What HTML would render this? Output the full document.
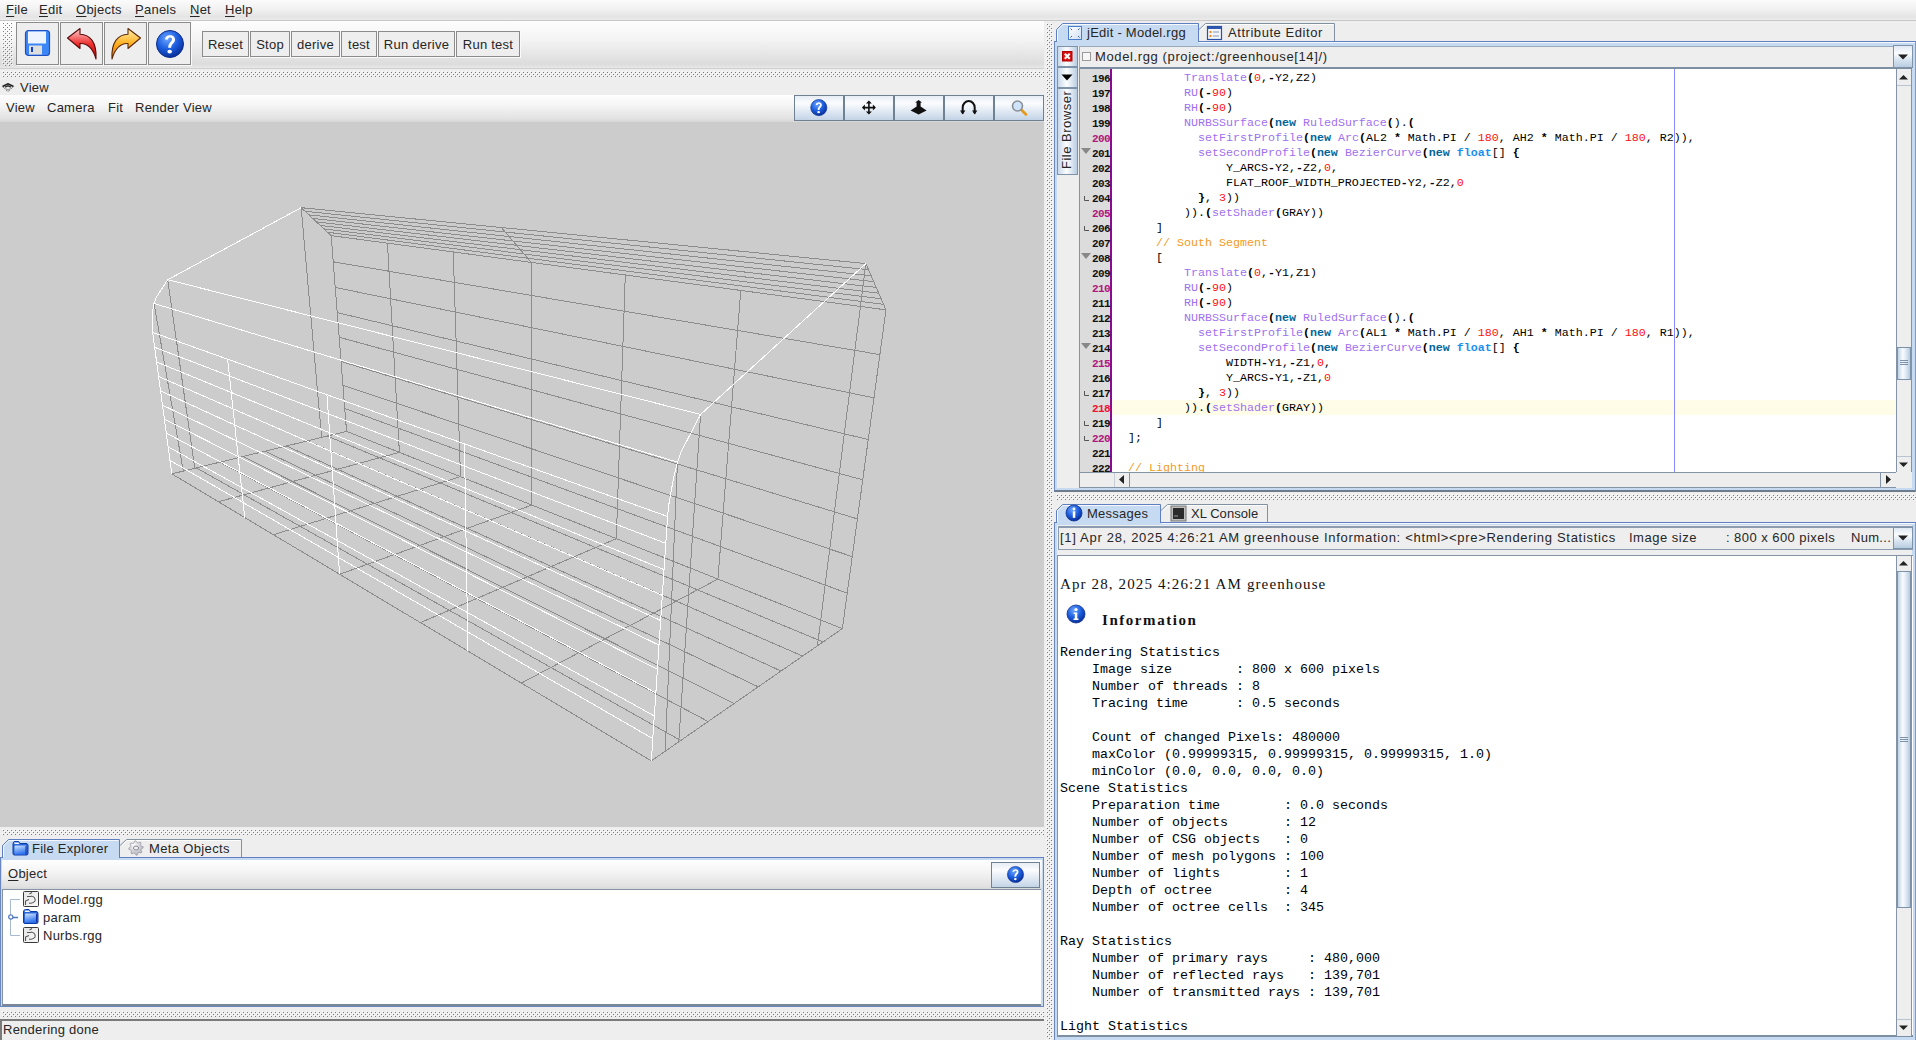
<!DOCTYPE html>
<html><head><meta charset="utf-8">
<style>
*{margin:0;padding:0;box-sizing:border-box}
html,body{width:1916px;height:1040px;overflow:hidden;background:#eeeeee;font-family:"Liberation Sans",sans-serif;font-size:13px;color:#262626;letter-spacing:.25px}
.a{position:absolute}
.t{position:absolute;white-space:pre;line-height:18px}
.u{text-decoration:underline;text-underline-offset:2px}
.tb{position:absolute;top:31px;height:26px;border:1px solid #8b8b8b;background:#eeeeee;box-shadow:1px 1px 0 #fafafa}
.tb span{position:absolute;left:0;right:0;top:4px;text-align:center;white-space:pre;line-height:18px}
.ib{position:absolute;top:22px;width:43px;height:43px;border:1px solid #8b8b8b;background:#eeeeee;box-shadow:1px 1px 0 #fafafa}
.vb{position:absolute;top:95px;height:26px;border:1px solid #6f8193;background:linear-gradient(#e6edf5,#fbfcfe 30%,#e3ebf4 60%,#c3d4e6)}
.tab{position:absolute;height:19px;border:1px solid #6b87c0;border-bottom:none;background:#eeeeee;border-radius:0}
.tab.sel{background:#c6dbf1}
.tab span{position:absolute;top:1px;white-space:pre;line-height:16px}
</style></head><body>
<svg width="0" height="0" style="position:absolute">
<defs>
<pattern id="dp" width="4" height="4" patternUnits="userSpaceOnUse">
<rect x="0" y="0" width="1" height="1" fill="#ffffff"/><rect x="1" y="1" width="1" height="1" fill="#727e8a"/>
<rect x="2" y="2" width="1" height="1" fill="#ffffff"/><rect x="3" y="3" width="1" height="1" fill="#727e8a"/>
</pattern>
<radialGradient id="hb" cx="40%" cy="30%" r="70%"><stop offset="0" stop-color="#6fa6ff"/><stop offset=".55" stop-color="#1c5fe0"/><stop offset="1" stop-color="#0a2f9a"/></radialGradient>
<linearGradient id="rg" x1="0" y1="0" x2="0" y2="1"><stop offset="0" stop-color="#ffd0d0"/><stop offset=".5" stop-color="#f03030"/><stop offset="1" stop-color="#b00000"/></linearGradient>
<linearGradient id="og" x1="0" y1="0" x2="0" y2="1"><stop offset="0" stop-color="#fff0b0"/><stop offset=".5" stop-color="#ffb020"/><stop offset="1" stop-color="#e07000"/></linearGradient>
<g id="help">
<circle cx="0" cy="0" r="13.5" fill="url(#hb)" stroke="#0b2f8c" stroke-width="1"/>
<path d="M-5,-4.5 C-5,-10 5,-10.5 5,-4.5 C5,-0.5 1.2,-0.5 1.2,3.8 L-1.8,3.8 C-1.8,-1.8 2,-2 2,-4.8 C2,-7 -2,-7 -2,-4.5 Z" fill="#fff"/>
<ellipse cx="-0.3" cy="7.6" rx="2.3" ry="1.9" fill="#fff"/>
</g>
</defs></svg>

<!-- MENUBAR -->
<div class="a" style="left:0;top:0;width:1916px;height:21px;background:linear-gradient(#fbfbfb,#f3f3f3 40%,#e4e4e4 85%,#ececec);border-bottom:1px solid #c6c6c6"></div>
<div class="t" style="left:6px;top:1px"><span class="u">F</span>ile</div>
<div class="t" style="left:39px;top:1px"><span class="u">E</span>dit</div>
<div class="t" style="left:76px;top:1px"><span class="u">O</span>bjects</div>
<div class="t" style="left:135px;top:1px"><span class="u">P</span>anels</div>
<div class="t" style="left:190px;top:1px"><span class="u">N</span>et</div>
<div class="t" style="left:225px;top:1px"><span class="u">H</span>elp</div>

<!-- LEFT toolbar -->
<div class="a" style="left:0;top:21px;width:1044px;height:48px;background:linear-gradient(#fdfdfd,#f4f4f4 40%,#dcdcdc 92%,#e8e8e8);border-bottom:1px solid #cfcfcf"></div>
<svg class="a" style="left:2px;top:22px" width="11" height="44"><rect width="11" height="44" fill="url(#dp)"/></svg>
<div class="ib" style="left:16px"></div>
<div class="ib" style="left:60px"></div>
<div class="ib" style="left:104px"></div>
<div class="ib" style="left:148px"></div>
<!-- save icon -->
<svg class="a" style="left:24px;top:29px" width="28" height="29">
<rect x="1.5" y="1.5" width="24" height="25" rx="3" fill="#3d86f5" stroke="#1f4fc0" stroke-width="1.2"/>
<rect x="4" y="2.5" width="18" height="12" fill="#eef4ff"/>
<rect x="5" y="16.5" width="13" height="9" fill="#dedede"/>
<rect x="7" y="18" width="2" height="5" fill="#1040d0"/>
</svg>
<!-- undo icon -->
<svg class="a" style="left:66px;top:27px" width="33" height="34">
<path d="M1.5,11 L14,1.5 L14,7.2 C24,7.5 31,15 30,32 C27,22 22,16 14,16.5 L14,21.5 Z" fill="url(#rg)" stroke="#5a0a0a" stroke-width="1.1" stroke-linejoin="round"/>
</svg>
<!-- redo icon -->
<svg class="a" style="left:109px;top:27px" width="33" height="34">
<path d="M31.5,11 L19,1.5 L19,7.2 C9,7.5 2,15 3,32 C6,22 11,16 19,16.5 L19,21.5 Z" fill="url(#og)" stroke="#5a2a0a" stroke-width="1.1" stroke-linejoin="round"/>
</svg>
<svg class="a" style="left:154px;top:28px" width="32" height="32"><use href="#help" x="16" y="16"/></svg>

<div class="tb" style="left:202px;width:47px"><span>Reset</span></div>
<div class="tb" style="left:250px;width:40px"><span>Stop</span></div>
<div class="tb" style="left:291px;width:49px"><span>derive</span></div>
<div class="tb" style="left:341px;width:36px"><span>test</span></div>
<div class="tb" style="left:378px;width:77px"><span>Run derive</span></div>
<div class="tb" style="left:456px;width:64px"><span>Run test</span></div>

<!-- vertical splitter -->
<svg class="a" style="left:1046px;top:23px" width="7" height="1017"><rect width="7" height="1017" fill="url(#dp)"/></svg>

<!-- dotted row -->
<svg class="a" style="left:2px;top:71px" width="1042" height="6"><rect width="1042" height="6" fill="url(#dp)"/></svg>

<!-- View title -->
<svg class="a" style="left:2px;top:83px" width="13" height="10">
<path d="M0.5,3.5 L6,0.8 L11.5,3.5" fill="none" stroke="#222" stroke-width="1.6"/>
<path d="M3,4.2 L6,2.8 L9,4.2" fill="none" stroke="#333" stroke-width="1.4"/>
<path d="M0.8,3.8 L6,8.6 L11.2,3.8" fill="none" stroke="#555" stroke-width="1" stroke-dasharray="1.2 1"/>
<path d="M3.5,5.5 L6,7 L8.5,5.5" fill="none" stroke="#777" stroke-width="0.8"/>
</svg>
<div class="t" style="left:20px;top:79px">View</div>
<!-- View menubar -->
<div class="a" style="left:0;top:95px;width:1044px;height:27px;background:linear-gradient(#fefefe,#f6f6f6 35%,#e2e2e2 88%,#d6d6d6)"></div>
<div class="t" style="left:6px;top:99px">View</div>
<div class="t" style="left:47px;top:99px">Camera</div>
<div class="t" style="left:108px;top:99px">Fit</div>
<div class="t" style="left:135px;top:99px">Render View</div>
<div class="vb" style="left:794px;width:50px"></div>
<div class="vb" style="left:844px;width:50px"></div>
<div class="vb" style="left:894px;width:50px"></div>
<div class="vb" style="left:944px;width:50px"></div>
<div class="vb" style="left:994px;width:50px"></div>
<svg class="a" style="left:794px;top:95px" width="250" height="26">
<g transform="translate(24.8,12.6) scale(0.6)"><use href="#help"/></g>
<g transform="translate(74.9,12.6)" fill="#111" stroke="#111">
<path d="M-5.5,0 H5.5 M0,-5.5 V5.5" stroke-width="1.6"/>
<path d="M-7,0 L-4,-3 L-4,3 Z M7,0 L4,-3 L4,3 Z M0,-7 L-3,-4 L3,-4 Z M0,7 L-3,4 L3,4 Z" stroke="none"/>
</g>
<g transform="translate(124.6,12.6)" fill="#111">
<path d="M-8,3 L-2,-1 L-2,-5 L-3.5,-5 L0,-7.5 L3.5,-5 L2,-5 L2,-1 L8,3 L0,7 Z"/>
</g>
<g transform="translate(174.7,12.6)" fill="none" stroke="#111">
<path d="M-6,5 V0 A6,6.5 0 0 1 6,0 V5" stroke-width="2"/>
<path d="M-8,3 L-6,6.5 L-4,3 M4,3 L6,6.5 L8,3" fill="#111" stroke-width="1"/>
</g>
<g transform="translate(223.5,11)">
<path d="M3.5,3.5 L8.5,8.5" stroke="#e49a18" stroke-width="2.6" stroke-linecap="round"/>
<circle cx="0" cy="0" r="5" fill="#cfe4fb" stroke="#8a8f96" stroke-width="1.6"/>
</g>
</svg>

<!-- canvas -->
<div class="a" style="left:0;top:122px;width:1044px;height:705px;background:#cccccc"></div>
<svg class="a" style="left:0;top:0" width="1044" height="827" shape-rendering="crispEdges"><g fill="none" stroke-width="1">
<g stroke="#8c8c8c">
<polyline points="346.56,431.34 842.39,628.59"/>
<polyline points="344.76,408.49 847.23,593.18"/>
<polyline points="342.93,385.20 852.23,556.63"/>
<polyline points="341.07,361.46 857.40,518.87"/>
<polyline points="339.16,337.27 862.73,479.86"/>
<polyline points="337.23,312.60 868.25,439.53"/>
<polyline points="335.25,287.45 873.96,397.80"/>
<polyline points="333.23,261.79 879.87,354.61"/>
<polyline points="331.17,235.62 885.99,309.87"/>
<polyline points="346.56,431.34 331.17,235.62"/>
<polyline points="399.42,452.37 387.43,243.15"/>
<polyline points="460.49,476.66 453.24,251.96"/>
<polyline points="531.85,505.05 531.29,262.40"/>
<polyline points="616.33,538.66 625.31,274.98"/>
<polyline points="717.91,579.07 740.78,290.44"/>
<polyline points="842.39,628.59 885.99,309.87"/>
<polyline points="171.81,473.88 651.34,760.82"/>
<polyline points="196.38,467.90 680.67,740.52"/>
<polyline points="220.09,462.13 708.15,721.50"/>
<polyline points="242.98,456.56 733.94,703.65"/>
<polyline points="265.09,451.17 758.21,686.85"/>
<polyline points="286.48,445.97 781.07,671.03"/>
<polyline points="307.16,440.93 802.66,656.09"/>
<polyline points="327.17,436.06 823.06,641.97"/>
<polyline points="346.56,431.34 842.39,628.59"/>
<polyline points="171.81,473.88 346.56,431.34"/>
<polyline points="218.41,501.77 399.42,452.37"/>
<polyline points="273.49,534.72 460.49,476.66"/>
<polyline points="339.59,574.28 531.85,505.05"/>
<polyline points="420.39,622.63 616.33,538.66"/>
<polyline points="521.42,683.08 717.91,579.07"/>
<polyline points="651.34,760.82 842.39,628.59"/>
<polyline points="301.17,207.68 865.86,263.62"/>
<polyline points="305.03,211.28 868.51,269.72"/>
<polyline points="308.86,214.84 871.12,275.72"/>
<polyline points="312.66,218.38 873.69,281.62"/>
<polyline points="316.42,221.88 876.23,287.44"/>
<polyline points="320.16,225.36 878.72,293.18"/>
<polyline points="323.86,228.81 881.18,298.82"/>
<polyline points="327.53,232.23 883.60,304.39"/>
<polyline points="331.17,235.62 885.99,309.87"/>
<polyline points="301.17,207.68 305.03,211.28 308.86,214.84 312.66,218.38 316.42,221.88 320.16,225.36 323.86,228.81 327.53,232.23 331.17,235.62"/>
<polyline points="501.37,227.52 505.26,232.04 509.10,236.52 512.90,240.95 516.65,245.33 520.37,249.67 524.05,253.96 527.69,258.20 531.29,262.40"/>
<polyline points="865.86,263.62 868.51,269.72 871.12,275.72 873.69,281.62 876.23,287.44 878.72,293.18 881.18,298.82 883.60,304.39 885.99,309.87"/>
<polyline points="301.17,207.68 321.64,437.41"/>
<polyline points="167.71,279.71 194.74,468.30"/>
<polyline points="154.01,303.49 183.32,471.08"/>
<polyline points="865.86,263.62 817.46,645.84"/>
<polyline points="700.61,414.40 678.74,741.86"/>
<polyline points="677.47,462.16 665.19,751.23"/>
</g><g stroke="#ffffff">
<polyline points="167.71,279.71 700.61,414.40"/>
<polyline points="154.01,303.49 677.47,462.16"/>
<polyline points="152.61,332.39 667.55,516.47"/>
<polyline points="154.63,347.27 665.77,543.34"/>
<polyline points="156.62,361.98 664.03,569.62"/>
<polyline points="158.60,376.52 662.32,595.34"/>
<polyline points="160.55,390.89 660.65,620.50"/>
<polyline points="162.48,405.11 659.02,645.13"/>
<polyline points="164.39,419.17 657.42,669.24"/>
<polyline points="166.27,433.08 655.85,692.85"/>
<polyline points="168.14,446.83 654.32,715.97"/>
<polyline points="169.99,460.43 652.81,738.62"/>
<polyline points="301.17,207.68 167.71,279.71 156.11,297.61 154.01,303.49 152.70,311.31 152.09,326.99 152.61,332.39 154.63,347.27 156.62,361.98 158.60,376.52 160.55,390.89 162.48,405.11 164.39,419.17 166.27,433.08 168.14,446.83 169.99,460.43 171.81,473.88"/>
<polyline points="865.86,263.62 700.61,414.40 681.68,450.60 677.47,462.16 673.66,477.15 668.47,506.58 667.55,516.47 665.77,543.34 664.03,569.62 662.32,595.34 660.65,620.50 659.02,645.13 657.42,669.24 655.85,692.85 654.32,715.97 652.81,738.62 651.34,760.82"/>
<polyline points="227.64,359.21 229.45,375.97 231.24,392.51 233.00,408.84 234.75,424.96 236.47,440.88 238.17,456.59 239.84,472.11 241.50,487.44 243.14,502.58 244.75,517.53"/>
<polyline points="326.91,394.70 328.27,413.88 329.60,432.76 330.91,451.37 332.21,469.71 333.48,487.77 334.74,505.57 335.98,523.12 337.20,540.42 338.40,557.47 339.59,574.28"/>
<polyline points="464.43,443.86 464.80,466.25 465.18,488.25 465.54,509.86 465.90,531.09 466.26,551.95 466.60,572.46 466.94,592.61 467.28,612.43 467.61,631.91 467.93,651.07"/>
</g></g></svg>

<!-- dotted row below canvas -->
<svg class="a" style="left:2px;top:829px" width="1042" height="6"><rect width="1042" height="6" fill="url(#dp)"/></svg>

<!-- bottom-left tabs -->
<!-- bottom-left panel -->
<div class="a" style="left:0;top:857px;width:1044px;height:150px;border:1px solid #6b87c0;border-top:1px solid #6b87c0;background:#c6dbf1"></div>
<svg class="a" style="left:0;top:838px" width="1044" height="22">
<path d="M2.5,20 V7.5 L8.5,1.5 H119.5 V20" fill="#c6dbf1" stroke="#5f7fc0" stroke-width="1"/>
<path d="M3.5,19 V8 L9,2.5 H118.5" fill="none" stroke="#ffffff" stroke-width="1" opacity=".8"/>
<path d="M120,19.5 V7.5 L126.5,1.5 H241.5 V20" fill="#eeeeee" stroke="none"/><path d="M120,7.5 L126.5,1.5 H241.5 V20" fill="none" stroke="#8191a3" stroke-width="1"/>
<path d="M122,7.8 L127,2.5 H240.5" fill="none" stroke="#ffffff" stroke-width="1"/>
<path d="M0.5,19.5 H2.5 M119.5,19.5 H1044" stroke="#5f7fc0" stroke-width="1"/>
</svg>
<div class="t" style="left:32px;top:840px">File Explorer</div>
<div class="t" style="left:149px;top:840px;letter-spacing:.36px">Meta Objects</div>
<svg class="a" style="left:12px;top:840px" width="17" height="16">
<path d="M1,4 Q1,1.5 3,1.5 L6.5,1.5 L8,3.5 L14,3.5 Q16,3.5 16,5.5 L16,13.5 Q16,15 14.5,15 L2.5,15 Q1,15 1,13.5 Z" fill="#2b66d8" stroke="#0a3aa8" stroke-width="1"/>
<path d="M2,2.5 H6.5 L7.5,4 H2.5 Z" fill="#f4f8ff"/>
<rect x="2.5" y="5.5" width="12" height="9" rx="1" fill="url(#fg)"/>
<path d="M14,6 V14.5" stroke="#1030a0" stroke-width="1"/>
</svg>
<svg class="a" style="left:128px;top:840px" width="16" height="17">
<defs><radialGradient id="gg" cx="35%" cy="30%" r="80%"><stop offset="0" stop-color="#ffffff"/><stop offset="1" stop-color="#a9a9b4"/></radialGradient></defs>
<polygon points="15.06,6.57 15.20,7.97 13.30,9.03 13.00,10.05 14.00,11.98 13.11,13.07 11.02,12.48 10.08,12.98 9.43,15.06 8.03,15.20 6.97,13.30 5.95,13.00 4.02,14.00 2.93,13.11 3.52,11.02 3.02,10.08 0.94,9.43 0.80,8.03 2.70,6.97 3.00,5.95 2.00,4.02 2.89,2.93 4.98,3.52 5.92,3.02 6.57,0.94 7.97,0.80 9.03,2.70 10.05,3.00 11.98,2.00 13.07,2.89 12.48,4.98 12.98,5.92" fill="url(#gg)" stroke="#9a9aa6" stroke-width=".7"/>
<ellipse cx="8" cy="8" rx="2.6" ry="2" fill="#f0f0f0" stroke="#8a8a96" stroke-width="1"/>
</svg>

<div class="a" style="left:2px;top:860px;width:1040px;height:29px;background:linear-gradient(#fefefe,#f6f6f6 35%,#e2e2e2 90%,#d8d8d8)"></div>
<div class="t" style="left:8px;top:865px"><span class="u">O</span>bject</div>
<div class="vb" style="left:991px;top:862px;width:49px;height:26px"></div>
<svg class="a" style="left:1000px;top:862px" width="31" height="26"><g transform="translate(15.5,12.5) scale(0.6)"><use href="#help"/></g></svg>
<div class="a" style="left:2px;top:889px;width:1039px;height:117px;background:#ffffff;border-top:1px solid #8494a6;border-left:1px solid #8494a6;border-bottom:2px solid #7a8796"></div>
<!-- tree -->
<svg class="a" style="left:8px;top:889px" width="40" height="60">
<path d="M2.5,10.5 H12 M2.5,10.5 V46.5 H12 M5,28.5 H10" stroke="#a7bad2" stroke-width="1" fill="none"/>
<path d="M5,28.5 H10" stroke="#5a7fc0" stroke-width="1.6" fill="none"/>
<circle cx="2.8" cy="28" r="2.1" fill="#fff" stroke="#5a7fc0" stroke-width="1.3"/>
</svg>
<svg class="a" style="left:22px;top:890px" width="18" height="56">
<defs><linearGradient id="fg" x1="0" y1="0" x2="0.3" y2="1"><stop offset="0" stop-color="#cfe2ff"/><stop offset="1" stop-color="#2f74ee"/></linearGradient>
<linearGradient id="ig" x1="0" y1="0" x2="1" y2="1"><stop offset="0" stop-color="#e6e6e6"/><stop offset="1" stop-color="#f8f8f8"/></linearGradient></defs>
<rect x="1.5" y="1.5" width="15" height="15" rx="1" fill="url(#ig)" stroke="#3a3a3a" stroke-width="1"/>
<path d="M3.5,15 V11 L7,9.5 M5,6.5 H9 M7.5,4 L10,2.5 M9,6 Q14,7 13,11 Q11,14 7,13" fill="none" stroke="#555" stroke-width="1.1"/>
<path d="M1.5,22 Q1.5,19.5 3.5,19.5 L7,19.5 L8.5,21.5 L14,21.5 Q16,21.5 16,23.5 L16,32 Q16,33.5 14.5,33.5 L3,33.5 Q1.5,33.5 1.5,32 Z" fill="#2b66d8" stroke="#0a3aa8" stroke-width="1"/>
<path d="M2.5,20.5 H7 L8,22 H3 Z" fill="#f4f8ff"/>
<rect x="3" y="23.5" width="12" height="9" rx="1" fill="url(#fg)"/>
<path d="M14.5,24 V32.5" stroke="#1030a0" stroke-width="1"/>
<rect x="1.5" y="37.5" width="15" height="15" rx="1" fill="url(#ig)" stroke="#3a3a3a" stroke-width="1"/>
<path d="M3.5,51 V47 L7,45.5 M5,42.5 H9 M7.5,40 L10,38.5 M9,42 Q14,43 13,47 Q11,50 7,49" fill="none" stroke="#555" stroke-width="1.1"/>
</svg>
<div class="t" style="left:43px;top:891px">Model.rgg</div>
<div class="t" style="left:43px;top:909px">param</div>
<div class="t" style="left:43px;top:927px">Nurbs.rgg</div>

<!-- dotted row + status -->
<svg class="a" style="left:2px;top:1011px" width="1042" height="6"><rect width="1042" height="6" fill="url(#dp)"/></svg>
<div class="a" style="left:0;top:1019px;width:1044px;height:21px;border-top:2px solid #7a7a7a;border-left:2px solid #7a7a7a;background:#eeeeee"></div>
<div class="t" style="left:3px;top:1021px">Rendering done</div>

<style>
.code{position:absolute;left:1114px;top:71px;font-family:"Liberation Mono",monospace;font-size:11.667px;line-height:15px;white-space:pre;letter-spacing:0;color:#000}
.code b{font-weight:bold}
.gut{position:absolute;left:1080px;top:72px;width:30px;text-align:right;font-family:"Liberation Mono",monospace;font-weight:bold;font-size:11px;line-height:15px;letter-spacing:-.6px;color:#111}
.gut div{height:15px}
.gut .ln5{color:#b0177e}.gut .cur{color:#ee1133}
.fn{color:#a070f0}.nw{color:#00659c;font-weight:bold}.fl{color:#1a8ff0;font-weight:bold}.nm{color:#ff1010}.cm{color:#f39a22}
.sbtn{position:absolute;border:1px solid #7f93a8;background:linear-gradient(90deg,#c9d9ea,#fbfdff 45%,#dfe9f3 70%,#b9cde1)}
.hbtn{position:absolute;border:1px solid #7f93a8;background:linear-gradient(#dfe8f2,#fbfdff 35%,#d8e4f0 65%,#b9cde1)}
.scb{position:absolute;background:#eeeeee;border:1px solid #b8c4d0}
</style>
<!-- RIGHT TOP panel -->
<div class="a" style="left:1054px;top:41px;width:862px;height:451px;border-left:1px solid #6b87c0;border-right:1px solid #7f9ac8;border-bottom:2px solid #6b7b8b;background:#c6dbf1"></div>
<div class="a" style="left:1199px;top:42px;width:716px;height:1px;background:#f4f8fd"></div>
<div class="a" style="left:1057px;top:46px;width:855px;height:442px;background:#eeeeee"></div>
<!-- RIGHT TOP tabs -->
<svg class="a" style="left:1054px;top:22px" width="862" height="21">
<path d="M2.5,20 V7.5 L8.5,1.5 H144.5 V20" fill="#c6dbf1" stroke="#5f7fc0" stroke-width="1"/>
<path d="M3.5,19 V8 L9,2.5 H143.5" fill="none" stroke="#ffffff" stroke-width="1" opacity=".8"/>
<path d="M145,19.5 V7.5 L151.5,1.5 H280.5 V20" fill="#eeeeee" stroke="none"/><path d="M145,7.5 L151.5,1.5 H280.5 V20" fill="none" stroke="#8191a3" stroke-width="1"/>
<path d="M147,7.8 L152,2.5 H279.5" fill="none" stroke="#ffffff" stroke-width="1"/>
<path d="M0.5,19.5 H2.5 M144.5,19.5 H862" stroke="#5f7fc0" stroke-width="1"/>
</svg>
<div class="t" style="left:1087px;top:24px;letter-spacing:.25px">jEdit - Model.rgg</div>
<div class="t" style="left:1228px;top:24px;letter-spacing:.55px">Attribute Editor</div>
<svg class="a" style="left:1067px;top:25px" width="16" height="16">
<defs><linearGradient id="jg" x1="0" y1="0" x2="1" y2="1"><stop offset="0" stop-color="#ffffff"/><stop offset="1" stop-color="#cfe0f6"/></linearGradient></defs>
<rect x="1.5" y="1.5" width="13" height="13" fill="url(#jg)" stroke="#4a7cc8" stroke-width="1"/>
<path d="M3.5,3.5 l1.5,1.5 M12.5,3.5 l-1.5,1.5 M3.5,12.5 l1.5,-1.5 M12.5,12.5 l-1.5,-1.5" stroke="#3a64a8" stroke-width="1"/>
</svg>
<svg class="a" style="left:1206px;top:25px" width="18" height="16">
<rect x="1.5" y="1.5" width="14" height="13" fill="#f4f6fa" stroke="#2a4fa8" stroke-width="1.2"/>
<rect x="2" y="2" width="13" height="2" fill="#3058b0"/>
<rect x="3.5" y="6" width="2" height="2" fill="#f08a20"/><rect x="3.5" y="10" width="2" height="2" fill="#f08a20"/>
<path d="M7,7 H13 M7,11 H13" stroke="#8899bb" stroke-width="1"/>
</svg>

<!-- sidebar -->
<div class="sbtn" style="left:1057px;top:46px;width:21px;height:21px"></div>
<div class="sbtn" style="left:1057px;top:67px;width:21px;height:21px"></div>
<div class="sbtn" style="left:1057px;top:88px;width:21px;height:87px"></div>
<svg class="a" style="left:1062px;top:51px" width="11" height="11">
<rect x="0.5" y="0.5" width="9.5" height="9.5" fill="#d81010" stroke="#b00000"/>
<path d="M2.8,2.8 L7.7,7.7 M7.7,2.8 L2.8,7.7" stroke="#fff" stroke-width="2"/>
</svg>
<svg class="a" style="left:1061px;top:74px" width="12" height="8"><path d="M0.5,0.5 H11.5 L6,6.5 Z" fill="#000"/></svg>
<div class="t" style="left:1058px;top:169px;transform-origin:0 0;transform:rotate(-90deg);letter-spacing:.5px">File Browser</div>
<div class="a" style="left:1079px;top:46px;width:1px;height:442px;background:#8494a6"></div>
<!-- header -->
<div class="a" style="left:1079px;top:46px;width:833px;height:23px;background:#eeeeee;border-top:1px solid #9aaabb;border-left:1px solid #9aaabb;border-bottom:2px solid #7d8fa3"></div>
<div class="a" style="left:1082px;top:52px;width:9px;height:9px;border:1px solid #9a9a9a;background:#f6f6f6"></div>
<div class="t" style="left:1095px;top:48px;letter-spacing:.62px">Model.rgg (project:/greenhouse[14]/)</div>
<div class="hbtn" style="left:1893px;top:45px;width:20px;height:23px"></div>
<svg class="a" style="left:1898px;top:54px" width="11" height="7"><path d="M0,0.5 H10 L5,5.5 Z" fill="#222"/></svg>
<!-- text area -->
<div class="a" style="left:1080px;top:69px;width:816px;height:403px;background:#ffffff"></div>
<div class="a" style="left:1080px;top:69px;width:30px;height:403px;background:#dcdcdc"></div>
<div class="a" style="left:1110px;top:69px;width:2px;height:403px;background:#8a0a90"></div>
<div class="a" style="left:1112px;top:400px;width:784px;height:15px;background:#fffde8"></div>
<div class="a" style="left:1674px;top:69px;width:1px;height:403px;background:#8888ff"></div>
<svg class="a" style="left:1080px;top:69px" width="30" height="403">
<g fill="#888">
<path d="M1,79 H11 L6,85 Z"/><path d="M1,184 H11 L6,190 Z"/><path d="M1,274 H11 L6,280 Z"/>
</g>
<g stroke="#555" stroke-width="1" fill="none">
<path d="M4.5,127 V131.5 H9"/><path d="M4.5,157 V161.5 H9"/><path d="M4.5,322 V326.5 H9"/><path d="M4.5,352 V356.5 H9"/><path d="M4.5,367 V371.5 H9"/>
</g>
</svg>
<div class="code">          <span class="fn">Translate</span><b>(</b><span class="nm">0</span>,<b>-</b>Y2,Z2)
          <span class="fn">RU</span><b>(</b><b>-</b><span class="nm">90</span>)
          <span class="fn">RH</span><b>(</b><b>-</b><span class="nm">90</span>)
          <span class="fn">NURBSSurface</span><b>(</b><span class="nw">new</span> <span class="fn">RuledSurface</span><b>(</b>).<b>(</b>
            <span class="fn">setFirstProfile</span><b>(</b><span class="nw">new</span> <span class="fn">Arc</span><b>(</b>AL2 <b>*</b> Math.PI / <span class="nm">180</span>, AH2 <b>*</b> Math.PI / <span class="nm">180</span>, R2)),
            <span class="fn">setSecondProfile</span><b>(</b><span class="nw">new</span> <span class="fn">BezierCurve</span><b>(</b><span class="nw">new</span> <span class="fl">float</span>[] <b>{</b>
                Y_ARCS<b>-</b>Y2,<b>-</b>Z2,<span class="nm">0</span>,
                FLAT_ROOF_WIDTH_PROJECTED<b>-</b>Y2,<b>-</b>Z2,<span class="nm">0</span>
            <b>}</b>, <span class="nm">3</span>))
          )).<b>(</b><span class="fn">setShader</span><b>(</b>GRAY))
      ]
      <span class="cm">// South Segment</span>
      [
          <span class="fn">Translate</span><b>(</b><span class="nm">0</span>,<b>-</b>Y1,Z1)
          <span class="fn">RU</span><b>(</b><b>-</b><span class="nm">90</span>)
          <span class="fn">RH</span><b>(</b><b>-</b><span class="nm">90</span>)
          <span class="fn">NURBSSurface</span><b>(</b><span class="nw">new</span> <span class="fn">RuledSurface</span><b>(</b>).<b>(</b>
            <span class="fn">setFirstProfile</span><b>(</b><span class="nw">new</span> <span class="fn">Arc</span><b>(</b>AL1 <b>*</b> Math.PI / <span class="nm">180</span>, AH1 <b>*</b> Math.PI / <span class="nm">180</span>, R1)),
            <span class="fn">setSecondProfile</span><b>(</b><span class="nw">new</span> <span class="fn">BezierCurve</span><b>(</b><span class="nw">new</span> <span class="fl">float</span>[] <b>{</b>
                WIDTH<b>-</b>Y1,<b>-</b>Z1,<span class="nm">0</span>,
                Y_ARCS<b>-</b>Y1,<b>-</b>Z1,<span class="nm">0</span>
            <b>}</b>, <span class="nm">3</span>))
          )).<b>(</b><span class="fn">setShader</span><b>(</b>GRAY))
      ]
  ];

  <span class="cm">// Lighting</span></div>
<div class="gut"><div>196</div><div>197</div><div>198</div><div>199</div><div class="ln5">200</div><div>201</div><div>202</div><div>203</div><div>204</div><div class="ln5">205</div><div>206</div><div>207</div><div>208</div><div>209</div><div class="ln5">210</div><div>211</div><div>212</div><div>213</div><div>214</div><div class="ln5">215</div><div>216</div><div>217</div><div class="cur">218</div><div>219</div><div class="ln5">220</div><div>221</div><div>222</div></div>

<!-- v scrollbar -->
<div class="a" style="left:1896px;top:69px;width:16px;height:404px;background:#eeeeee;border-left:1px solid #8494a6;border-right:1px solid #8494a6"></div>
<div class="a" style="left:1897px;top:71px;width:14px;height:15px;background:#eeeeee;border-bottom:1px solid #b8c4d0"></div>
<svg class="a" style="left:1899px;top:74px" width="10" height="7"><path d="M0,5.5 H9 L4.5,1 Z" fill="#222"/></svg>
<div class="sbtn" style="left:1897px;top:347px;width:14px;height:33px;background:linear-gradient(90deg,#c0d3e8,#f8fbfe 40%,#dbe6f1 70%,#b4c9df);border-color:#7d92a9"></div>
<svg class="a" style="left:1899px;top:360px" width="10" height="6"><path d="M1,0.5 H9 M1,2.5 H9 M1,4.5 H9" stroke="#7d92a9" stroke-width="1"/></svg>
<div class="a" style="left:1897px;top:456px;width:14px;height:16px;background:#eeeeee;border-top:1px solid #b8c4d0"></div>
<svg class="a" style="left:1899px;top:462px" width="10" height="7"><path d="M0,0.5 H9 L4.5,5 Z" fill="#222"/></svg>
<!-- h scrollbar -->
<div class="a" style="left:1080px;top:472px;width:816px;height:16px;background:#eeeeee;border-top:1px solid #8494a6;border-bottom:1px solid #8494a6"></div>
<div class="a" style="left:1080px;top:473px;width:34px;height:14px;background:#eeeeee"></div>
<div class="a" style="left:1114px;top:473px;width:16px;height:14px;background:#eeeeee;border-left:1px solid #c6cfd8;border-right:1px solid #8494a6"></div>
<svg class="a" style="left:1118px;top:475px" width="8" height="10"><path d="M6,0 V9 L1,4.5 Z" fill="#222"/></svg>
<div class="a" style="left:1880px;top:473px;width:16px;height:14px;background:#eeeeee;border-left:1px solid #8494a6"></div>
<svg class="a" style="left:1885px;top:475px" width="8" height="10"><path d="M1,0 V9 L6,4.5 Z" fill="#222"/></svg>
<div class="a" style="left:1896px;top:472px;width:16px;height:16px;background:#eeeeee"></div>

<style>
.msg{position:absolute;left:1060px;top:644px;font-family:"Liberation Mono",monospace;font-size:13.333px;line-height:17px;white-space:pre;letter-spacing:0;color:#000}
</style>
<!-- dotted row -->
<svg class="a" style="left:1056px;top:494px" width="860" height="6"><rect width="860" height="6" fill="url(#dp)"/></svg>
<!-- panel -->
<div class="a" style="left:1054px;top:522px;width:862px;height:518px;border-left:1px solid #6b87c0;border-right:1px solid #7f9ac8;background:#c6dbf1"></div>
<div class="a" style="left:1161px;top:523px;width:754px;height:1px;background:#f4f8fd"></div>
<div class="a" style="left:1057px;top:525px;width:855px;height:511px;background:#eeeeee"></div>
<!-- tabs -->
<svg class="a" style="left:1054px;top:503px" width="862" height="21">
<path d="M2.5,20 V7.5 L8.5,1.5 H106.5 V20" fill="#c6dbf1" stroke="#5f7fc0" stroke-width="1"/>
<path d="M3.5,19 V8 L9,2.5 H105.5" fill="none" stroke="#ffffff" stroke-width="1" opacity=".8"/>
<path d="M107,19.5 V7.5 L113.5,1.5 H213.5 V20" fill="#eeeeee" stroke="none"/><path d="M107,7.5 L113.5,1.5 H213.5 V20" fill="none" stroke="#8191a3" stroke-width="1"/>
<path d="M109,7.8 L114,2.5 H212.5" fill="none" stroke="#ffffff" stroke-width="1"/>
<path d="M0.5,19.5 H2.5 M106.5,19.5 H862" stroke="#5f7fc0" stroke-width="1"/>
</svg>
<svg class="a" style="left:1065px;top:504px" width="18" height="18">
<circle cx="9" cy="9" r="8" fill="url(#hb)" stroke="#0b2f8c" stroke-width="0.8"/>
<circle cx="9" cy="5" r="1.4" fill="#fff"/><rect x="7.8" y="7.3" width="2.5" height="6.5" fill="#fff"/>
</svg>
<div class="t" style="left:1087px;top:505px;letter-spacing:.25px">Messages</div>
<svg class="a" style="left:1170px;top:505px" width="17" height="17">
<rect x="1" y="1" width="15" height="15" fill="#bdbdbd" stroke="#777" stroke-width="1"/>
<rect x="3" y="3" width="11" height="11" fill="#2b2b2b"/>
<path d="M4,11 H8" stroke="#999" stroke-width="1"/>
</svg>
<div class="t" style="left:1191px;top:505px;letter-spacing:.05px">XL Console</div>

<!-- combo -->
<div class="a" style="left:1058px;top:526px;width:855px;height:24px;background:#eeeeee;border:1px solid #8c9cb0;border-top:2px solid #8c9cb0"></div>
<div class="t" style="left:1060px;top:529px;letter-spacing:.69px">[1] Apr 28, 2025 4:26:21 AM greenhouse Information: &lt;html&gt;&lt;pre&gt;Rendering Statistics</div>
<div class="t" style="left:1629px;top:529px;letter-spacing:.5px">Image size</div>
<div class="t" style="left:1726px;top:529px;letter-spacing:.45px">: 800 x 600 pixels</div>
<div class="t" style="left:1851px;top:529px;letter-spacing:.3px">Num...</div>
<div class="hbtn" style="left:1893px;top:527px;width:20px;height:22px"></div>
<svg class="a" style="left:1898px;top:535px" width="11" height="7"><path d="M0,0.5 H10 L5,5.5 Z" fill="#222"/></svg>
<!-- message pane -->
<div class="a" style="left:1057px;top:555px;width:856px;height:482px;background:#ffffff;border-top:1px solid #8494a6;border-left:1px solid #8494a6;border-bottom:2px solid #7d8fa3"></div>
<div class="t" style="left:1060px;top:576px;font-family:'Liberation Serif',serif;font-size:15px;line-height:17px;letter-spacing:1.12px;color:#111">Apr 28, 2025 4:26:21 AM greenhouse</div>
<svg class="a" style="left:1066px;top:604px" width="20" height="20">
<circle cx="10" cy="10" r="9" fill="url(#hb)" stroke="#0b2f8c" stroke-width="0.8"/>
<circle cx="10" cy="5.5" r="1.6" fill="#fff"/><path d="M7.5,8.5 H11.3 V14.5 H12.5 V16 H7.5 V14.5 H8.8 V10 H7.5 Z" fill="#fff"/>
</svg>
<div class="t" style="left:1102px;top:612px;font-family:'Liberation Serif',serif;font-weight:bold;font-size:15px;line-height:17px;letter-spacing:1.55px;color:#111">Information</div>
<div class="msg">Rendering Statistics
    Image size        : 800 x 600 pixels
    Number of threads : 8
    Tracing time      : 0.5 seconds

    Count of changed Pixels: 480000
    maxColor (0.99999315, 0.99999315, 0.99999315, 1.0)
    minColor (0.0, 0.0, 0.0, 0.0)
Scene Statistics
    Preparation time        : 0.0 seconds
    Number of objects       : 12
    Number of CSG objects   : 0
    Number of mesh polygons : 100
    Number of lights        : 1
    Depth of octree         : 4
    Number of octree cells  : 345

Ray Statistics
    Number of primary rays     : 480,000
    Number of reflected rays   : 139,701
    Number of transmitted rays : 139,701

Light Statistics</div>
<!-- scrollbar -->
<div class="a" style="left:1896px;top:556px;width:16px;height:480px;background:#eeeeee;border-left:1px solid #8494a6;border-right:1px solid #8494a6"></div>
<div class="a" style="left:1897px;top:557px;width:14px;height:15px;background:#eeeeee;border-bottom:1px solid #b8c4d0"></div>
<svg class="a" style="left:1899px;top:560px" width="10" height="7"><path d="M0,5.5 H9 L4.5,1 Z" fill="#222"/></svg>
<div class="sbtn" style="left:1897px;top:571px;width:14px;height:337px;background:linear-gradient(90deg,#c0d3e8,#f8fbfe 40%,#dbe6f1 70%,#b4c9df);border-color:#7d92a9"></div>
<svg class="a" style="left:1899px;top:737px" width="10" height="6"><path d="M1,0.5 H9 M1,2.5 H9 M1,4.5 H9" stroke="#7d92a9" stroke-width="1"/></svg>
<div class="a" style="left:1897px;top:1019px;width:14px;height:16px;background:#eeeeee;border-top:1px solid #b8c4d0"></div>
<svg class="a" style="left:1899px;top:1025px" width="10" height="7"><path d="M0,0.5 H9 L4.5,5 Z" fill="#222"/></svg>
</body></html>
